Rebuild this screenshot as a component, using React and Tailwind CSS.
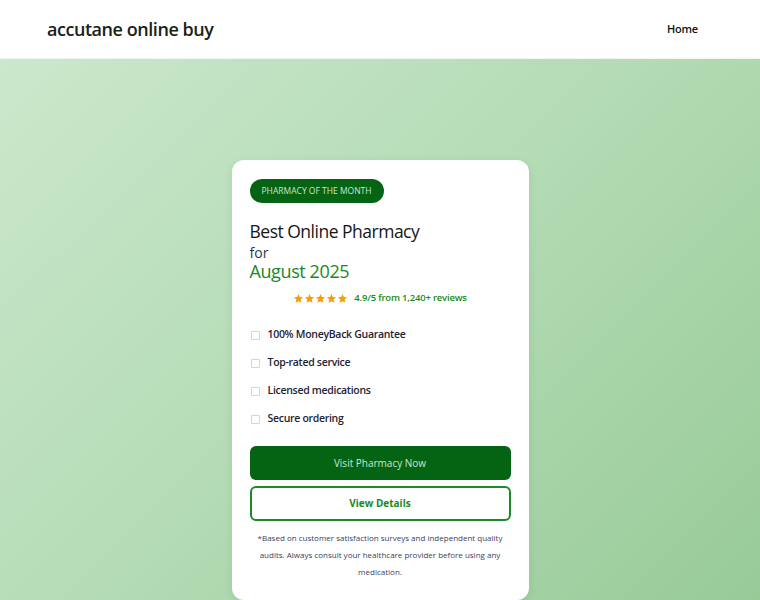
import React from 'react';

const font = { fontFamily: '"Open Sans", "Noto Sans", sans-serif' };

const features = [
  '100% MoneyBack Guarantee',
  'Top-rated service',
  'Licensed medications',
  'Secure ordering',
];

const Star = () => (
  <svg width="11" height="11" viewBox="0 0 24 24" fill="#f59e0b">
    <path d="M12 2l2.9 6.9 7.1.6-5.4 4.7 1.7 7.3L12 17.8 5.7 21.5l1.7-7.3L2 9.5l7.1-.6z" />
  </svg>
);

export default function App() {
  return (
    <div className="w-[760px] h-[600px] overflow-hidden flex flex-col" style={font}>
      <header className="h-[59px] shrink-0 bg-white border-b border-gray-100 flex items-center justify-between pl-[47px] pr-[62px]">
        <h1 className="text-[18px] font-semibold text-[#1c2118] tracking-[-0.45px]">accutane online buy</h1>
        <nav className="text-[11px] font-semibold text-[#111] tracking-[-0.2px]">Home</nav>
      </header>

      <main className="flex-1 bg-[linear-gradient(135deg,#cbe8cc_0%,#b3dbb4_50%,#98ca98_100%)] flex justify-center pt-[101px]">
        <div className="w-[297px] h-[440px] bg-white rounded-[12px] shadow-[0_2px_10px_rgba(0,0,0,0.08)] px-[18px] pt-[19px]">
          <div className="flex w-fit items-center h-[24px] px-[12px] rounded-full bg-[#056414] text-[#c8e6c9] text-[8.5px] uppercase">
            Pharmacy of the Month
          </div>

          <h2 className="mt-[16px] text-[17.5px] leading-[24px] font-medium text-[#161616] tracking-[-0.5px]">Best Online Pharmacy</h2>
          <div className="mt-[1px] text-[14px] leading-[18px] text-[#2b3650]">for</div>
          <div className="text-[18px] leading-[18px] font-medium text-[#188a24] tracking-[-0.4px]">August 2025</div>

          <div className="mt-[12px] h-[13px] flex items-center justify-center gap-[6px]">
            <div className="flex gap-0">
              <Star /><Star /><Star /><Star /><Star />
            </div>
            <span className="text-[9.5px] font-semibold text-[#188a24] tracking-[-0.2px]">4.9/5 from 1,240+ reviews</span>
          </div>

          <ul className="mt-[21px] flex flex-col gap-[10px]">
            {features.map((f) => (
              <li key={f} className="flex items-center gap-[8px] h-[18px] pl-[1px]">
                <span className="w-[9px] h-[9px] border border-gray-300 rounded-[1px] shrink-0" />
                <span className="text-[10.5px] font-semibold text-[#1f2433] tracking-[-0.3px]">{f}</span>
              </li>
            ))}
          </ul>

          <button className="mt-[18px] w-full h-[34px] rounded-[6px] bg-[#056414] text-[#c8e6c9] text-[10px]">
            Visit Pharmacy Now
          </button>
          <button className="mt-[6px] w-full h-[35px] rounded-[6px] border-2 border-[#198a27] text-[#188a24] text-[10px] font-bold">
            View Details
          </button>

          <p className="mt-[8px] px-[4px] text-center text-[8px] leading-[17px] text-[#3a4160]">
            *Based on customer satisfaction surveys and independent quality audits. Always consult your healthcare provider before using any medication.
          </p>
        </div>
      </main>
    </div>
  );
}
